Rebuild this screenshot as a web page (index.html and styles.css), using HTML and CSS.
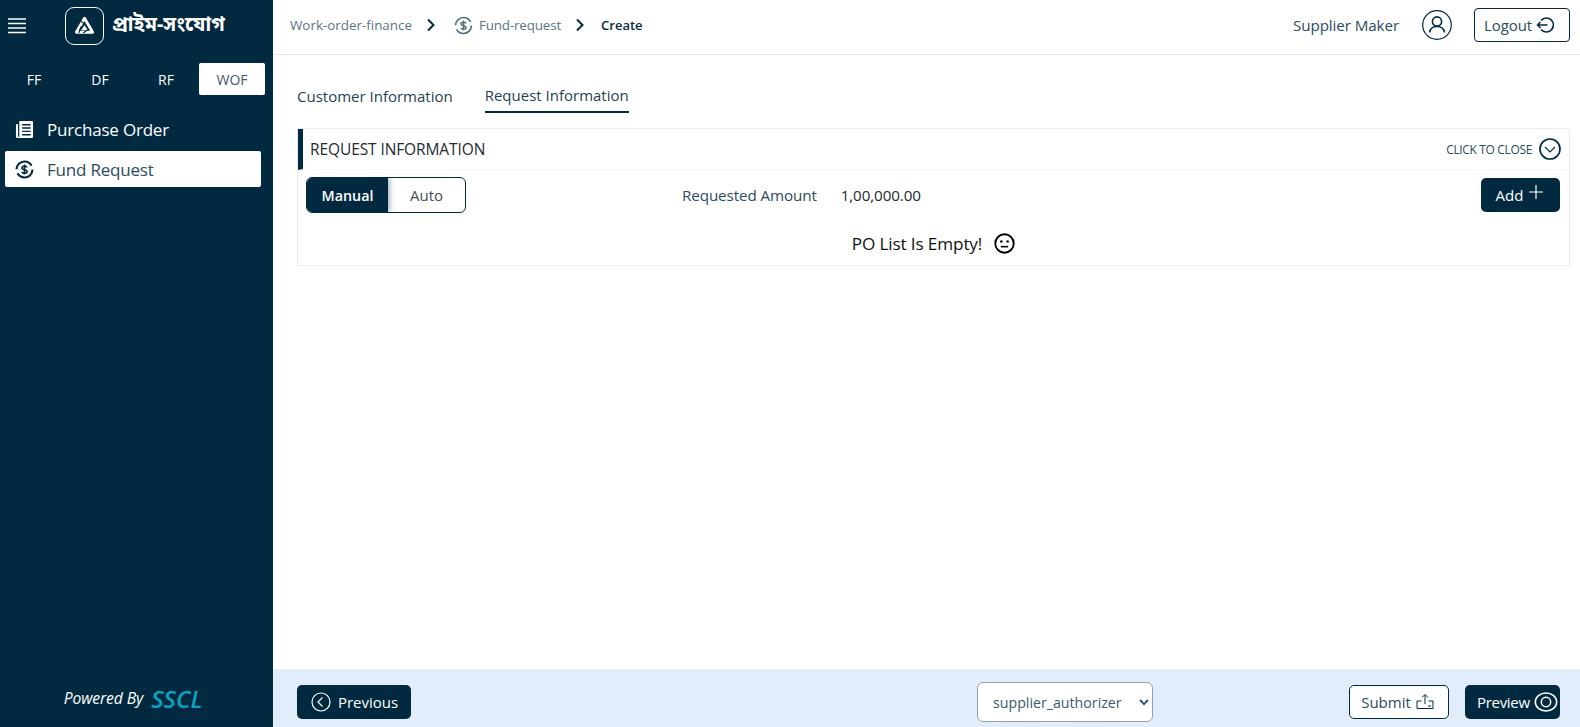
FILE: index.html
```html
<!DOCTYPE html>
<html lang="en">
<head>
<meta charset="utf-8">
<title>Fund Request</title>
<link rel="stylesheet" href="styles.css">
</head>
<body>
<div class="app">
  <aside class="sidebar">
    <div class="brand">
      <svg class="burger" viewBox="0 0 18 16" width="18" height="16"><path d="M0 1h18M0 5.500h18M0 10h18M0 14.500h18" stroke="#fff" stroke-width="1.300" fill="none"/></svg>
      <span class="logo-box">
        <svg viewBox="0 0 24 24" width="23" height="23"><path d="M12 4.500 20.500 19H3.500Z" fill="none" stroke="#fff" stroke-width="3" stroke-linejoin="round"/><path d="M12 11.500 15.500 17H8.500Z" fill="#fff"/><path d="M8.500 7.500 14 12.500M17 15.500 10.500 19.800M6 19.800 8.500 13" fill="none" stroke="#012a41" stroke-width="1.200"/></svg>
      </span>
      <span class="brand-name">প্রাইম-সংযোগ</span>
    </div>
    <div class="modules">
      <span class="module">FF</span>
      <span class="module">DF</span>
      <span class="module">RF</span>
      <span class="module module-active">WOF</span>
    </div>
    <nav class="menu">
      <a class="menu-item">
        <svg viewBox="0 0 20 20" width="19" height="19"><path d="M4.500 1h13.500a1 1 0 0 1 1 1v15.500a1.500 1.500 0 0 1-1.500 1.500H2.500A1.500 1.500 0 0 1 1 17.500V4.500h2.200v13h1.300z" fill="#fff"/><path d="M7.500 5h9M7.500 8.500h9M7.500 12h9M7.500 15.500h9" stroke="#012a41" stroke-width="1.500"/></svg>
        <span>Purchase Order</span>
      </a>
      <a class="menu-item menu-item-active">
        <svg viewBox="0 0 20 20" width="19" height="19"><circle cx="10" cy="10" r="8.400" fill="none" stroke="#012a41" stroke-width="2.200" stroke-dasharray="22 4.400"/><path d="M12.800 7.800c-.5-.9-1.500-1.300-2.800-1.300-1.500 0-2.700.6-2.700 1.800 0 2.600 5.500 1.200 5.500 3.800 0 1.200-1.200 1.800-2.800 1.800-1.300 0-2.300-.4-2.900-1.300M10 4.800v10.400" fill="none" stroke="#012a41" stroke-width="1.700"/></svg>
        <span>Fund Request</span>
      </a>
    </nav>
    <div class="powered"><em>Powered By</em><strong>SSCL</strong></div>
  </aside>

  <div class="main">
    <header class="topbar">
      <div class="crumbs">
        <span class="crumb">Work-order-finance</span>
        <svg class="chev" viewBox="0 0 10 14" width="10" height="14"><path d="M2 1.500 7.500 7 2 12.500" fill="none" stroke="#012a41" stroke-width="2"/></svg>
        <svg class="crumb-icon" viewBox="0 0 20 20" width="19" height="19"><circle cx="10" cy="10" r="8.400" fill="none" stroke="#4e6b7d" stroke-width="1.700" stroke-dasharray="22 4.400"/><path d="M12.800 7.800c-.5-.9-1.500-1.300-2.800-1.300-1.500 0-2.700.6-2.700 1.800 0 2.600 5.500 1.200 5.500 3.800 0 1.200-1.200 1.800-2.800 1.800-1.300 0-2.300-.4-2.900-1.300M10 4.800v10.400" fill="none" stroke="#4e6b7d" stroke-width="1.500"/></svg>
        <span class="crumb crumb-fund">Fund-request</span>
        <svg class="chev" viewBox="0 0 10 14" width="10" height="14"><path d="M2 1.500 7.500 7 2 12.500" fill="none" stroke="#012a41" stroke-width="2"/></svg>
        <span class="crumb-current">Create</span>
      </div>
      <div class="user">
        <span class="user-name">Supplier Maker</span>
        <svg viewBox="0 0 30 30" width="30" height="30"><circle cx="15" cy="15" r="14.300" fill="none" stroke="#012a41" stroke-width="1.200"/><circle cx="15" cy="11.500" r="4.600" fill="none" stroke="#012a41" stroke-width="1.600"/><path d="M7.500 22.500c.6-4 3.500-6 7.500-6s6.900 2 7.500 6" fill="none" stroke="#012a41" stroke-width="1.600"/></svg>
        <button class="btn btn-outline btn-logout">Logout
          <svg viewBox="0 0 18 18" width="18" height="18"><path d="M5 4.500A7 7 0 1 1 5 13.500M1.500 9h10M4.500 6 1.500 9l3 3" fill="none" stroke="#012a41" stroke-width="1.500"/></svg>
        </button>
      </div>
    </header>

    <main class="content">
      <div class="tabs">
        <span class="tab">Customer Information</span>
        <span class="tab tab-active">Request Information</span>
      </div>
      <section class="panel">
        <div class="panel-head">
          <span class="panel-title">REQUEST INFORMATION</span>
          <span class="panel-close">CLICK TO CLOSE
            <svg viewBox="0 0 22 22" width="22" height="22"><circle cx="11" cy="11" r="10" fill="none" stroke="#012a41" stroke-width="1.700"/><path d="M6 9l5 5 5-5" fill="none" stroke="#012a41" stroke-width="1.200"/></svg>
          </span>
        </div>
        <div class="panel-row">
          <div class="toggle">
            <span class="toggle-on">Manual</span>
            <span class="toggle-off">Auto</span>
          </div>
          <div class="amount">
            <span class="amount-label">Requested Amount</span>
            <span class="amount-value">1,00,000.00</span>
          </div>
          <button class="btn btn-solid btn-add">Add
            <svg viewBox="0 0 14 14" width="14" height="14"><path d="M7 0v14M0 7h14" stroke="#fff" stroke-width="1.200"/></svg>
          </button>
        </div>
        <div class="empty">
          <span>PO List Is Empty!</span>
          <svg viewBox="0 0 20 20" width="20" height="20"><circle cx="10" cy="10" r="8.800" fill="none" stroke="#000" stroke-width="1.800"/><circle cx="7" cy="8" r="1.200"/><circle cx="13" cy="8" r="1.200"/><path d="M6.500 13h7" stroke="#000" stroke-width="1.500"/></svg>
        </div>
      </section>
    </main>

    <footer class="actions">
      <button class="btn btn-solid btn-prev">
        <svg viewBox="0 0 20 20" width="20" height="20"><circle cx="10" cy="10" r="9" fill="none" stroke="#fff" stroke-width="1.200"/><path d="M11.500 5.500 7 10l4.500 4.500" fill="none" stroke="#fff" stroke-width="1.200"/></svg>
        Previous
      </button>
      <select class="role-select"><option>supplier_authorizer</option></select>
      <div class="actions-right">
        <button class="btn btn-outline btn-submit">Submit
          <svg viewBox="0 0 18 18" width="18" height="18"><path d="M5.500 8H1v7.500h16V8h-4.500M9 11V2M6 4.500 9 1.500l3 3M12 13h3" fill="none" stroke="#012a41" stroke-width="1"/></svg>
        </button>
        <button class="btn btn-solid btn-preview">Preview
          <svg viewBox="0 0 22 20" width="24" height="22"><ellipse cx="11" cy="10" rx="9.800" ry="8.300" fill="none" stroke="#fff" stroke-width="1.400"/><circle cx="11" cy="10" r="4.300" fill="none" stroke="#fff" stroke-width="1.400"/></svg>
        </button>
      </div>
    </footer>
  </div>
</div>
</body>
</html>
```
FILE: styles.css
```css
* { box-sizing: border-box; }
html, body { margin: 0; height: 100%; }
body {
  font-family: "Open Sans", "Noto Sans", sans-serif;
  color: #012a41;
  background: #fff;
  overflow: hidden;
}
.app { display: flex; height: 727px; }

.sidebar {
  width: 273px;
  flex: none;
  background: #012a41;
  color: #fff;
  display: flex;
  flex-direction: column;
}
.brand {
  height: 55px;
  display: flex;
  align-items: center;
  padding: 0 0 4px 8px;
  flex: none;
}
.burger { flex: none; }
.logo-box {
  width: 39px;
  height: 38px;
  margin-left: 39px;
  border: 1.500px solid #fff;
  border-radius: 9px;
  display: flex;
  align-items: center;
  justify-content: center;
}
.brand-name {
  margin-left: 8px;
  font-family: "Noto Sans Bengali", "Noto Sans", sans-serif;
  font-size: 20px;
  font-weight: 700;
  white-space: nowrap;
}
.modules {
  display: flex;
  padding: 8px 8px 0 1px;
}
.module {
  width: 66px;
  height: 32px;
  display: flex;
  align-items: center;
  justify-content: center;
  font-size: 14px;
}
.module-active {
  background: #fff;
  color: #3b5a6d;
  border-radius: 2px;
}
.menu {
  margin-top: 16px;
  padding: 0 12px 0 5px;
  display: flex;
  flex-direction: column;
  gap: 4px;
}
.menu-item {
  height: 36px;
  display: flex;
  align-items: center;
  gap: 13px;
  padding-left: 10px;
  font-size: 17px;
  border-radius: 2px;
  letter-spacing: -0.2px;
}
.menu-item-active {
  background: #fff;
  color: #2b4b5e;
}
.powered {
  margin-top: auto;
  height: 58px;
  display: flex;
  align-items: center;
  justify-content: center;
  gap: 8px;
  padding-right: 7px;
}
.powered em { font-size: 15.700px; font-weight: 400; letter-spacing: -0.1px; }
.powered strong {
  font-size: 24px;
  font-style: italic;
  font-weight: 600;
  color: #0aa3c2;
}

.main {
  flex: 1;
  min-width: 0;
  display: flex;
  flex-direction: column;
}
.topbar {
  height: 55px;
  flex: none;
  border-bottom: 1px solid #e6e8ea;
  display: flex;
  align-items: center;
  justify-content: space-between;
  padding: 0 10px 4px 17px;
}
.crumbs { display: flex; align-items: center; }
.crumb { font-size: 13.400px; color: #5a7485; }
.crumb-fund { letter-spacing: -0.15px; }
.chev { margin: 0 16px 0 14px; }
.crumb-icon { margin: 0 6px 0 2px; }
.crumb-current { font-size: 13px; font-weight: 600; color: #012a41; }
.user { display: flex; align-items: center; }
.user-name { font-size: 15.200px; color: #2b4b5e; margin-right: 23px; letter-spacing: -0.1px; }

.btn {
  font-family: inherit;
  display: inline-flex;
  align-items: center;
  justify-content: center;
  border-radius: 4px;
  cursor: pointer;
  height: 34px;
  padding: 0;
  font-size: 15px;
}
.btn-solid { background: #012a41; color: #fff; border: 0; }
.btn-outline { background: #fff; color: #2b4b5e; border: 1px solid #012a41; }
.btn-logout { width: 96px; margin-left: 22px; gap: 4px; padding-right: 6px; letter-spacing: -0.1px; }

.content {
  flex: 1;
  min-height: 0;
  padding: 24px 10px 0 24px;
}
.tabs { display: flex; gap: 32px; height: 49px; }
.tab {
  height: 34px;
  line-height: 34px;
  font-size: 15px;
  color: #1f3f52;
}
.tab-active { border-bottom: 2px solid #012a41; line-height: 32px; }

.panel { border: 1px solid #e9ebed; height: 138px; }
.panel-head {
  height: 41px;
  border-left: 5px solid #012a41;
  border-bottom: 1px solid #f2f3f4;
  display: flex;
  align-items: center;
  justify-content: space-between;
  padding: 0 8px 0 7px;
}
.panel-title { font-size: 15.500px; color: #212b31; letter-spacing: -0.1px; }
.panel-close {
  display: flex;
  align-items: center;
  gap: 7px;
  font-size: 12px;
  color: #2b4b5e;
  letter-spacing: -0.35px;
}
.panel-row {
  display: flex;
  align-items: center;
  justify-content: space-between;
  padding: 7px 9px 0 8px;
}
.toggle {
  display: flex;
  width: 160px;
  height: 36px;
  border: 1px solid #012a41;
  border-radius: 6px;
  overflow: hidden;
  font-size: 15px;
}
.toggle-on {
  width: 81px;
  background: #012a41;
  color: #fff;
  font-weight: 600;
  display: flex;
  align-items: center;
  justify-content: center;
  font-size: 14.300px;
  box-shadow: 2px 0 5px rgba(1, 42, 65, .35);
}
.toggle-off {
  flex: 1;
  display: flex;
  align-items: center;
  justify-content: center;
  color: #4a4f53;
  font-size: 15px;
}
.amount {
  display: flex;
  gap: 24px;
  margin-left: 56px;
  margin-right: auto;
  padding-left: 160px;
  font-size: 15.200px;
}
.amount-label { color: #2b4b5e; letter-spacing: -0.1px; }
.amount-value { color: #212b31; letter-spacing: -0.1px; }
.btn-add { width: 79px; gap: 6px; font-size: 15px; border-radius: 5px; padding-right: 2px; }
.btn-add svg { margin-top: -6px; }
.empty {
  display: flex;
  align-items: center;
  justify-content: center;
  gap: 12px;
  margin-top: 13px;
  height: 34px;
  font-size: 17.200px;
  color: #111;
  letter-spacing: -0.15px;
}
.empty svg { width: 21px; height: 21px; }

.actions {
  height: 58px;
  flex: none;
  background: #e2edfb;
  border-top: 1px solid #e6eef8;
  display: flex;
  align-items: center;
  justify-content: space-between;
  padding: 0 20px 0 24px;
}
.btn-prev { width: 114px; gap: 7px; border-radius: 5px; margin-top: 6px; padding-left: 1px; }
.role-select {
  width: 176px;
  height: 40px;
  margin-top: 6px;
  margin-left: 370px;
  border: 1px solid #9a9fa3;
  border-radius: 6px;
  background: #fff;
  color: #3b5a6d;
  font-family: inherit;
  font-size: 14.200px;
  padding: 2px 0 0 11px;
}
.actions-right { display: flex; gap: 16px; margin-top: 6px; }
.btn-submit { width: 100px; gap: 5px; border-radius: 5px; padding-right: 3px; }
.btn-preview { width: 95px; gap: 4px; border-radius: 5px; letter-spacing: -0.3px; padding-left: 9px; justify-content: flex-start; }
.btn-preview { padding-left: 12px; }
```
